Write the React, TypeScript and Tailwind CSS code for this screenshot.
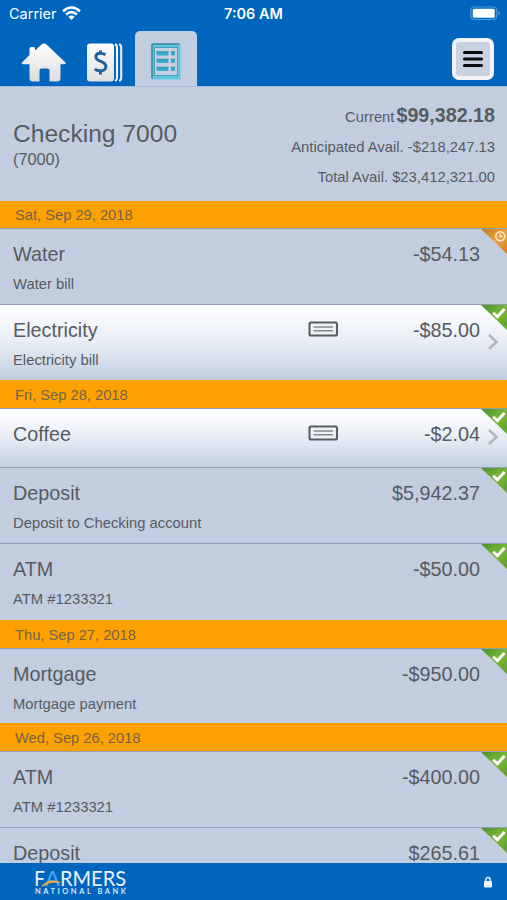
import React from "react";

type Status = "pending" | "cleared";

interface Transaction {
  name: string;
  note?: string;
  amount: string;
  status: Status;
  check?: boolean;
  height: string;
}

interface Day {
  date: string;
  height: string;
  items: Transaction[];
}

const days: Day[] = [
  {
    date: "Sat, Sep 29, 2018",
    height: "h-[27px]",
    items: [
      { name: "Water", note: "Water bill", amount: "-$54.13", status: "pending", height: "h-[76px]" },
      { name: "Electricity", note: "Electricity bill", amount: "-$85.00", status: "cleared", check: true, height: "h-[76px]" },
    ],
  },
  {
    date: "Fri, Sep 28, 2018",
    height: "h-[28px]",
    items: [
      { name: "Coffee", amount: "-$2.04", status: "cleared", check: true, height: "h-[59px]" },
      { name: "Deposit", note: "Deposit to Checking account", amount: "$5,942.37", status: "cleared", height: "h-[76px]" },
      { name: "ATM", note: "ATM #1233321", amount: "-$50.00", status: "cleared", height: "h-[77px]" },
    ],
  },
  {
    date: "Thu, Sep 27, 2018",
    height: "h-[28px]",
    items: [
      { name: "Mortgage", note: "Mortgage payment", amount: "-$950.00", status: "cleared", height: "h-[75px]" },
    ],
  },
  {
    date: "Wed, Sep 26, 2018",
    height: "h-[28px]",
    items: [
      { name: "ATM", note: "ATM #1233321", amount: "-$400.00", status: "cleared", height: "h-[76px]" },
      { name: "Deposit", amount: "$265.61", status: "cleared", height: "h-[77px]" },
    ],
  },
];

function HomeIcon() {
  return (
    <svg width="46" height="40" viewBox="0 0 46 40">
      <defs>
        <linearGradient id="metal" x1="0" y1="0" x2="0" y2="1">
          <stop offset="0" stopColor="#fff" />
          <stop offset="1" stopColor="#dcdcdc" />
        </linearGradient>
      </defs>
      <path
        d="M20.500 1.500q2.500-2 5 0L44.500 19.500q1 1.500-1 1.800H39.500V35q0 3.500-3.500 3.500H28.500V27.500q0-2-2-2h-6q-2 0-2 2V38.500H11.500Q8.500 38.500 8.500 35V21.300H2q-2-.3-1-1.800L8.500 12V5.500q0-1.500 1.500-1.500h2.500q1.500 0 1.500 1.500V7.500z"
        fill="url(#metal)"
      />
    </svg>
  );
}

function BillsIcon() {
  return (
    <svg width="37" height="40" viewBox="0 0 37 40">
      <defs>
        <linearGradient id="card" x1="0" y1="0" x2="0" y2="1">
          <stop offset="0" stopColor="#fff" />
          <stop offset="1" stopColor="#dedede" />
        </linearGradient>
      </defs>
      <rect x="1" y="0.500" width="27" height="38" rx="3" fill="url(#card)" />
      <path d="M29 1q2 1.200 2 3v31q0 1.800-2 3" fill="none" stroke="#f2f4f5" strokeWidth="2.100" />
      <path d="M33.200 1q2 1.200 2 3v31q0 1.800-2 3" fill="none" stroke="#e9edf0" strokeWidth="2.100" />
      <path
        d="M19.500 11.800q-2.500-1.600-5-1.600c-3 0-4.600 1.500-4.600 3.800 0 5.200 10 3.600 10 9.400 0 2.900-2.600 4.400-5.700 4.400q-3.200 0-5.500-1.700M14.500 7.500v3.500M14.500 27v4.500"
        fill="none"
        stroke="#1f5f9f"
        strokeWidth="3"
      />
    </svg>
  );
}

function RegisterIcon() {
  return (
    <svg width="30" height="38" viewBox="0 0 30 38">
      <rect x="0.500" y="0.500" width="29" height="36" rx="1.500" fill="#62c5e0" />
      <path d="M1 35.500V2Q1 1 2 1H28.500" fill="none" stroke="#39899f" strokeWidth="1.500" />
      <rect x="3.500" y="4.500" width="23" height="28" fill="#c4d0e1" stroke="#3e9cb5" strokeWidth="0.900" />
      {[8.5, 16, 24].map((y) => (
        <g key={y}>
          <rect x="5.500" y={y} width="12" height="4" rx="0.800" fill="#35acca" />
          <rect x="20" y={y} width="4" height="4" rx="0.800" fill="#35acca" />
          <path d={`M5.500 ${y + 0.3}h12M20 ${y + 0.3}h4`} stroke="#3c8599" strokeWidth="0.800" />
        </g>
      ))}
    </svg>
  );
}

function Corner({ status }: { status: Status }) {
  const pending = status === "pending";
  return (
    <svg className="absolute top-0 right-0" width="27" height="26" viewBox="0 0 27 26">
      <defs>
        <linearGradient id="green" x1="0" y1="0" x2="0.800" y2="1">
          <stop offset="0" stopColor="#4b8f2e" />
          <stop offset="0.550" stopColor="#7ab83a" />
          <stop offset="1" stopColor="#62a030" />
        </linearGradient>
        <linearGradient id="amber" x1="0" y1="0" x2="0.800" y2="1">
          <stop offset="0" stopColor="#c17b22" />
          <stop offset="0.550" stopColor="#eca243" />
          <stop offset="1" stopColor="#d58624" />
        </linearGradient>
      </defs>
      <path d="M1 0H27V25z" fill={pending ? "url(#amber)" : "url(#green)"} />
      {pending ? (
        <g fill="none" stroke="#fff0d9">
          <circle cx="20.300" cy="7.300" r="4.500" strokeWidth="1.500" />
          <path d="M20.300 4.500V7.500H23" strokeWidth="1.200" />
        </g>
      ) : (
        <path d="M13.200 7.800l4.200 3.900L24.500 4" fill="none" stroke="#fff" strokeWidth="2.900" />
      )}
    </svg>
  );
}

function CheckIcon() {
  return (
    <svg width="31" height="16" viewBox="0 0 31 16">
      <rect x="1.500" y="1.500" width="27.500" height="13" rx="1.500" fill="#eef1f5" stroke="#585e65" strokeWidth="2.100" />
      <path d="M5.500 6h19.500M5.500 9.800h19.500" stroke="#858b92" strokeWidth="1.400" />
    </svg>
  );
}

function Row({ item }: { item: Transaction }) {
  return (
    <div
      className={`relative shrink-0 border-t border-[#929fb5] px-[13px] pt-[13px] ${item.height} ${
        item.check ? "bg-linear-to-b from-white via-[#e8edf5] to-[#c2cee0]" : "bg-[#c2cee0]"
      }`}
    >
      <div className="flex h-6 items-center text-[19.8px] leading-6">
        <span className="flex-1">{item.name}</span>
        {item.check && (
          <span className="mr-[73px] -mt-[2px]">
            <CheckIcon />
          </span>
        )}
        <span className={`mr-[14px] text-right ${item.check ? "w-[68px]" : ""}`}>{item.amount}</span>
      </div>
      {item.note && <div className="mt-[8px] text-[14.8px] leading-5">{item.note}</div>}
      <Corner status={item.status} />
      {item.check && (
        <svg className={`absolute right-[8px] ${item.note ? "top-[29px]" : "top-[20px]"}`} width="12" height="16" viewBox="0 0 12 16">
          <path d="M2 1l7.500 7L2 15" fill="none" stroke="#b3b6bc" strokeWidth="2.500" />
        </svg>
      )}
    </div>
  );
}

function BankLogo() {
  return (
    <svg width="100" height="35" viewBox="0 -5 100 35" fontFamily="Lato, sans-serif">
      <text x="1" y="18" fontSize="20.500" fill="#e8f2fc" textLength="11" lengthAdjust="spacingAndGlyphs">F</text>
      <text x="12" y="18" fontSize="20.500" fill="#41aee9" textLength="15" lengthAdjust="spacingAndGlyphs">A</text>
      <text x="27" y="18" fontSize="20.500" fill="#e8f2fc" textLength="66" lengthAdjust="spacingAndGlyphs">RMERS</text>
      <path d="M9 18.500C12 13.500 19 11.500 27 14.500C19 13.500 14 15 9 18.500z" fill="#f4a936" stroke="#f4a936" strokeWidth="0.900" />
      <text x="2" y="25.500" fontSize="7.500" fontWeight="700" fill="#d3e6f8" textLength="91">NATIONAL BANK</text>
    </svg>
  );
}

export default function App() {
  return (
    <div className="flex h-[900px] w-[507px] flex-col overflow-hidden bg-[#c2cee0] font-['Liberation_Sans',Arial,sans-serif] text-[#555b62]">
      <header className="flex h-[86px] shrink-0 flex-col bg-[#0065bd] text-white">
        <div className="grid h-[28px] grid-cols-3 items-center pr-[6px] pl-[9px] font-[Inter,sans-serif] text-[14.5px]">
          <div className="flex items-center gap-[6px]">
            <span>Carrier</span>
            <svg className="-mt-[2px] -ml-px" width="19" height="15" viewBox="0 0 19 15" fill="none" stroke="#fff" strokeWidth="2.500">
              <path d="M1 5.300q8.500-7.500 17 0M4 8.500q5.500-4.800 11 0" />
              <path d="M6.300 10.700q3.200-2.600 6.400 0L9.500 14z" fill="#fff" stroke="none" />
            </svg>
          </div>
          <div className="-ml-[3px] text-center font-semibold">7:06 AM</div>
          <svg className="-mt-[2px] justify-self-end" width="31" height="15" viewBox="0 0 31 15">
            <rect x="0.800" y="1" width="26" height="12.500" rx="3.500" fill="none" stroke="#4f9bdc" strokeWidth="1.200" />
            <rect x="2.800" y="2.800" width="22" height="9" rx="1.500" fill="#fff" />
            <path d="M28.500 5v4.500q3-2.200 0-4.500" fill="#69a9df" />
          </svg>
        </div>
        <div className="flex flex-1 pr-[13px] pl-[21px]">
          <div className="mt-[15px] w-[46px]">
            <HomeIcon />
          </div>
          <div className="mt-[15px] ml-[19px] w-[37px]">
            <BillsIcon />
          </div>
          <div className="mt-[3px] ml-[12px] flex w-[62px] justify-center rounded-t-[5px] bg-[#c2cee0] pt-[12px]">
            <RegisterIcon />
          </div>
          <div className="flex-1" />
          <button className="mt-[10px] flex h-[42px] w-[42px] items-center justify-center rounded-[7px] border-[4px] border-[#f2f3f6] bg-[#c8d2e2]">
            <svg width="22" height="20" viewBox="0 0 22 20" stroke="#080b10" strokeWidth="3.200" strokeLinecap="round">
              <path d="M2.500 3.500h17M2.500 10h17M2.500 16.500h17" />
            </svg>
          </button>
        </div>
      </header>

      <section className="flex h-[115px] shrink-0 justify-between border-t border-[#a6bddb] pr-[12px] pl-[13px]">
        <div className="pt-[33px]">
          <h1 className="text-[24.6px] leading-[28px]">Checking 7000</h1>
          <div className="text-[16.2px] leading-[22px]">(7000)</div>
        </div>
        <div className="pt-[13px] text-right text-[14.8px] leading-[30px]">
          <div className="flex items-baseline justify-end gap-[2px]">
            <span>Current</span>
            <strong className="text-[19.7px] leading-[30px]">$99,382.18</strong>
          </div>
          <div>Anticipated Avail. -$218,247.13</div>
          <div>Total Avail. $23,412,321.00</div>
        </div>
      </section>

      <main className="flex min-h-0 flex-1 flex-col overflow-hidden">
        {days.map((day) => (
          <section key={day.date} className="flex shrink-0 flex-col">
            <h2 className={`flex shrink-0 items-center bg-[#fda100] px-[15px] pt-[2px] text-[14.7px] text-[#75644a] ${day.height}`}>
              {day.date}
            </h2>
            {day.items.map((item) => (
              <Row key={item.name} item={item} />
            ))}
          </section>
        ))}
      </main>

      <footer className="flex h-[37px] shrink-0 items-start justify-between bg-[#0065bd] pr-[14px] pl-[33px]">
        <BankLogo />
        <svg className="mt-[13px]" width="10" height="13" viewBox="0 0 10 13">
          <rect x="1" y="5" width="8" height="6.500" rx="1" fill="#eef2f7" />
          <path d="M2.800 6V4q0-2.500 2.200-2.500T7.200 4v2" fill="none" stroke="#eef2f7" strokeWidth="1.400" />
        </svg>
      </footer>
    </div>
  );
}
